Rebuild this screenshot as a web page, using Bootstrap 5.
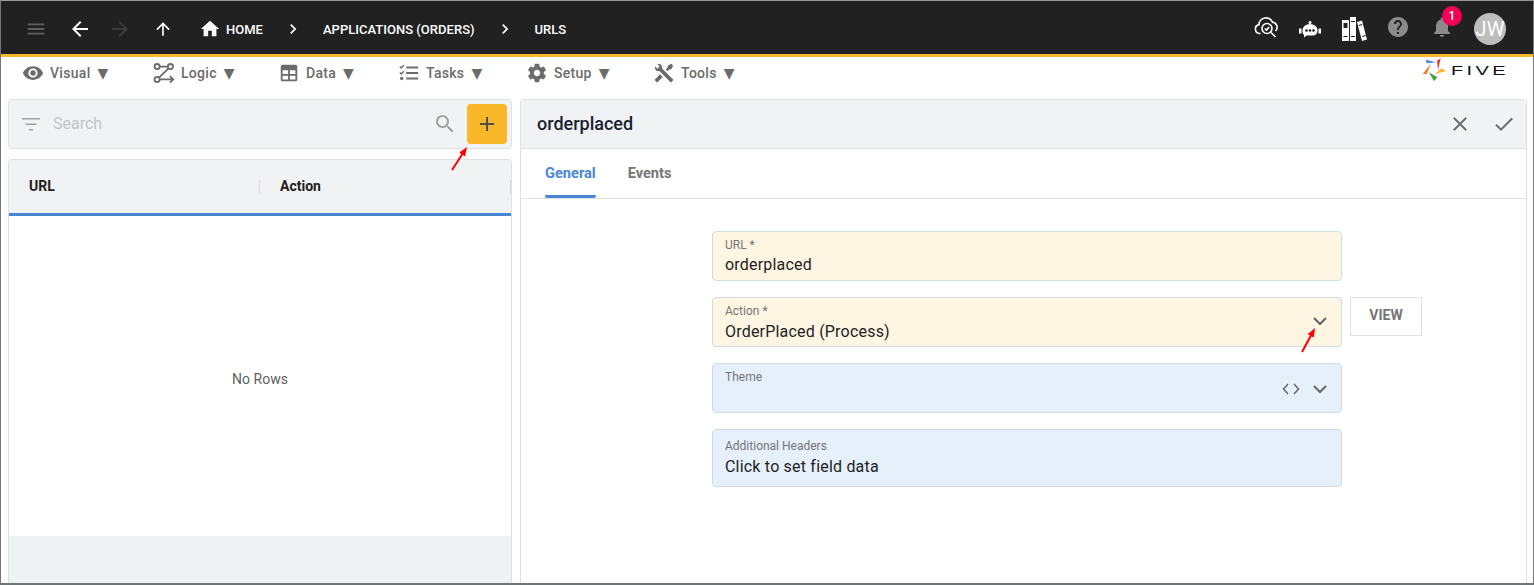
<!DOCTYPE html>
<html lang="en">
<head>
<meta charset="utf-8">
<title>URLs</title>
<link href="https://cdn.jsdelivr.net/npm/bootstrap@5.3.0/dist/css/bootstrap.min.css" rel="stylesheet">
<style>
html,body{height:585px;overflow:hidden;background:#fff}
body{font-family:Roboto,"Liberation Sans",sans-serif;color:#212121}
.shell{height:585px;border-left:1px solid #777;border-right:1px solid #777;border-top:1px solid #999;border-bottom:2px solid #6f7476;display:flex;flex-direction:column;overflow:hidden}
.topbar{height:56px;flex:none;background:#212121;border-bottom:3px solid #f9b72a;padding-left:24px;padding-right:27px;padding-top:2px}
.top-ic{display:block;flex:none}
.top-ic.raised{margin-top:-4px}
.crumb{font-size:13px;font-weight:500;color:#fff;text-transform:uppercase;white-space:nowrap;padding-top:3px;letter-spacing:.02px}
.menubar{height:36px;flex:none;padding-left:21px;padding-right:28px;padding-bottom:4px;position:relative}
.menu-it{font-size:14px;font-weight:500;color:#6b6b6b;letter-spacing:.3px;white-space:nowrap;gap:6px}
.menu-it svg{flex:none}
.tri{font-family:"DejaVu Sans",sans-serif;font-size:14px;margin-left:1px;letter-spacing:0}
.workspace{flex:1;min-height:0;padding:6px 6px 0 7px;gap:8px}
.leftcol{width:504px;flex:none;gap:10px}
.panelbox{background:#f0f2f4;border:1px solid #dfe0e1;border-radius:4px}
.searchbar{height:50px;padding:0 4px 0 10px;flex:none}
.search-ph{font-size:16px;color:#c2c4c6}
.addbtn{width:40px;height:40px;background:#f9b72a;border:0;border-radius:4px;padding:0;position:relative}
.gridbox{flex:1;border:1px solid #dfe0e1;border-bottom:0;border-radius:4px 4px 0 0;overflow:hidden}
.gridhead{height:56px;background:#f0f2f4;border-bottom:3px solid #4a86d6;font-size:14px;font-weight:700;flex:none}
.hcell{width:251px;padding-left:20px;position:relative}
.hcell::after{content:"";position:absolute;right:0;top:4px;height:14px;width:1px;background:#d5d7d9}
.gridbody{flex:1;font-size:14px;color:#5f5f5f;padding-top:6px}
.gridfoot{height:47px;background:#eff2f3;flex:none}
.rightcol{flex:1;min-width:0;border:1px solid #dfe0e1;border-bottom:0;border-radius:4px 4px 0 0}
.formhead{height:49px;background:#f0f2f4;border-bottom:1px solid #dfe0e1;padding:0 10px 0 16px;flex:none}
.formtitle{font-size:18px;font-weight:500;color:#1b2330;margin-top:-2px}
.tabstrip{height:50px;border-bottom:1px solid #e0e0e0;padding-left:24px;gap:32px;flex:none}
.tabit{font-size:14.6px;font-weight:700;color:#757575;height:49px;display:flex;align-items:center;border-bottom:3px solid transparent;padding-top:3px}
.tabit.on{color:#4a86d6;border-bottom-color:#4a86d6;border-radius:0 0 2px 2px}
.formarea{padding-top:32px;padding-left:191px;position:relative}
.frow{display:flex;gap:8px;margin-bottom:16px;align-items:flex-start}
.fbox{width:630px;height:50px;border:1px solid #cfdbe6;border-radius:4px;padding:6px 12px 0;position:relative}
.fbox.req{background:#fff5e3}
.fbox.opt{background:#e5f0fb}
.fbox.tall{height:58px;padding-top:9px}
.flabel{font-size:12px;color:#757575;line-height:15px}
.fval{font-size:16px;letter-spacing:.2px;color:#222;line-height:20px;margin-top:2px}
.fval.lower{margin-top:3px}
.fic{position:absolute;top:15px;right:13px}
.fic.lowered{top:17px}
.fic2{position:absolute;top:17px;right:41px}
.viewbtn{width:72px;height:39px;border:1px solid #e0e0e0;border-radius:0;background:#fff;font-size:14px;font-weight:700;color:#757575;padding:0 0 2px}
.arrow1{position:absolute;left:-17px;top:41px;pointer-events:none}
.arrow2{position:absolute;left:587px;top:28px;pointer-events:none;z-index:2}
.avatar{width:32px;height:32px;border-radius:50%;background:#bdbdbd;color:#fff;font-size:20px;display:flex;align-items:center;justify-content:center;flex:none}
.bellwrap{position:relative;width:24px;height:24px;flex:none}
.notif{position:absolute;left:12px;top:-9px;width:20px;height:20px;border-radius:50%;background:#f50057;color:#fff;font-size:12px;font-weight:500;display:flex;align-items:center;justify-content:center}
.brand{position:absolute;left:1421px;top:0;height:26px}
.brand-word{display:inline-block;font-family:"Liberation Sans",sans-serif;font-size:12.5px;line-height:12px;font-weight:400;color:#111;letter-spacing:2.1px;transform:scaleX(1.6);transform-origin:left center;margin-left:3px;margin-top:8px}
</style>
</head>
<body>
<div class="shell">
  <div class="topbar d-flex align-items-center">
    <svg class="top-ic" width="22" height="22" viewBox="0 0 24 24" fill="#5e5e5e"><path d="M3 18h18v-2H3v2zm0-5h18v-2H3v2zm0-7v2h18V6H3z"/></svg>
    <svg class="top-ic" style="margin-left:21px" width="24" height="24" viewBox="0 0 24 24" fill="#fff"><path d="M20 11H7.830l5.590-5.590L12 4l-8 8 8 8 1.410-1.410L7.830 13H20v-2z"/></svg>
    <svg class="top-ic" style="margin-left:16px" width="24" height="24" viewBox="0 0 24 24" fill="#3a3a3a"><path d="M12 4l-1.410 1.410L16.170 11H4v2h12.170l-5.580 5.590L12 20l8-8z"/></svg>
    <svg class="top-ic" style="margin-left:21px" width="20" height="20" viewBox="0 0 24 24" fill="#fff"><path d="M4 12l1.410 1.410L11 7.830V20h2V7.830l5.580 5.590L20 12l-8-8-8 8z"/></svg>
    <svg class="top-ic" style="margin-left:26px" width="22" height="22" viewBox="0 0 24 24" fill="#fff"><path d="M10 20v-6h4v6h5v-8h3L12 3 2 12h3v8z"/></svg>
    <span class="crumb" style="margin-left:5px">Home</span>
    <svg class="top-ic" style="margin-left:20px" width="20" height="20" viewBox="0 0 24 24" fill="#fff"><path d="M10 6L8.590 7.410 13.170 12l-4.580 4.590L10 18l6-6z"/></svg>
    <span class="crumb" style="margin-left:20px">Applications (Orders)</span>
    <svg class="top-ic" style="margin-left:20px" width="20" height="20" viewBox="0 0 24 24" fill="#fff"><path d="M10 6L8.590 7.410 13.170 12l-4.580 4.590L10 18l6-6z"/></svg>
    <span class="crumb" style="margin-left:20px">URLs</span>
    <div class="ms-auto d-flex align-items-center">
      <svg class="top-ic raised" width="26" height="26" viewBox="0 0 26 26" fill="none" stroke="#fff" stroke-width="1.600"><path d="M6.500 19.500H6a4.500 4.500 0 0 1-1-8.900A7 7 0 0 1 18.400 8.100 5.200 5.200 0 0 1 21.500 17"/><circle cx="13" cy="14.500" r="5"/><path d="M10.800 14.500l1.600 1.600 2.800-3M17 18.500l4.500 4.500"/></svg>
      <svg class="top-ic" style="margin-left:18px" width="24" height="24" viewBox="0 0 24 24" fill="#fff"><circle cx="12" cy="5.500" r="1.500"/><path d="M4.500 13a7.500 6 0 0 1 15 0v1a4.500 4.500 0 0 1-4.500 4.500H8.500L6 20.500V18a4.500 4.500 0 0 1-1.500-3.500z"/><path d="M1 11.500h2.500v5H1zM20.500 11.500H23v5h-2.500z"/><g fill="#212121"><circle cx="8.500" cy="13.500" r="1.300"/><circle cx="12" cy="13.500" r="1.300"/><circle cx="15.500" cy="13.500" r="1.300"/></g></svg>
      <svg class="top-ic" style="margin-left:19px" width="26" height="26" viewBox="0 0 26 26" fill="#fff"><path d="M1 4h7v21H1zM9 1h6v24H9z"/><path d="M16 6l5-1.500 5 19-5 1.500z"/><g fill="#212121"><path d="M2.500 7h4v5h-4zM2.500 20h4v1h-4zM10 5h4v1h-4zM10 20h4v1h-4zM17.500 9l3.500-1 .3 1-3.500 1zM21 20l3.500-1 .3 1-3.500 1z"/></g></svg>
      <svg class="top-ic raised" style="margin-left:19px" width="24" height="24" viewBox="0 0 24 24" fill="#8a8a8a"><path d="M12 2C6.480 2 2 6.480 2 12s4.480 10 10 10 10-4.480 10-10S17.520 2 12 2zm1 17h-2v-2h2v2zm2.070-7.750l-.9.920C13.450 12.900 13 13.500 13 15h-2v-.5c0-1.100.45-2.100 1.170-2.830l1.240-1.260c.37-.36.59-.86.59-1.410 0-1.100-.9-2-2-2s-2 .9-2 2H8c0-2.210 1.790-4 4-4s4 1.790 4 4c0 .88-.36 1.680-.93 2.250z"/></svg>
      <div class="bellwrap" style="margin-left:20px;margin-top:-4px">
        <svg class="top-ic" width="24" height="24" viewBox="0 0 24 24" fill="#8a8a8a"><path d="M12 22c1.100 0 2-.9 2-2h-4c0 1.100.89 2 2 2zm6-6v-5c0-3.070-1.640-5.640-4.500-6.320V4c0-.83-.67-1.500-1.500-1.500s-1.500.67-1.500 1.500v.68C7.630 5.360 6 7.920 6 11v5l-2 2v1h16v-1l-2-2z"/></svg>
        <span class="notif">1</span>
      </div>
      <div class="avatar" style="margin-left:20px">JW</div>
    </div>
  </div>
  <div class="menubar d-flex align-items-center">
    <span class="menu-it d-flex align-items-center" style="width:131px"><svg width="22" height="22" viewBox="0 0 24 24" fill="#6b6b6b"><path d="M12 4.500C7 4.500 2.730 7.610 1 12c1.730 4.390 6 7.500 11 7.500s9.270-3.110 11-7.500c-1.730-4.390-6-7.500-11-7.500zM12 17c-2.760 0-5-2.240-5-5s2.240-5 5-5 5 2.240 5 5-2.240 5-5 5zm0-8c-1.660 0-3 1.340-3 3s1.340 3 3 3 3-1.340 3-3-1.340-3-3-3z"/></svg>Visual<span class="tri">▼</span></span>
    <span class="menu-it d-flex align-items-center" style="width:125px"><svg width="22" height="22" viewBox="0 0 24 24" fill="none" stroke="#6b6b6b" stroke-width="2"><circle cx="4.500" cy="5" r="2.800"/><circle cx="19" cy="5" r="2.800"/><circle cx="4.500" cy="19" r="2.800"/><path d="M7.300 5h9M6.500 17l10.500-10M7.300 19H22m-3.500-3.500L22 19l-3.500 3.500"/></svg>Logic<span class="tri">▼</span></span>
    <span class="menu-it d-flex align-items-center" style="width:120px"><svg width="22" height="22" viewBox="0 0 24 24" fill="#6b6b6b"><path d="M5 3h14a2 2 0 0 1 2 2v14a2 2 0 0 1-2 2H5a2 2 0 0 1-2-2V5a2 2 0 0 1 2-2zm0 6v4h6V9zm8 0v4h6V9zm-8 6v4h6v-4zm8 0v4h6v-4z"/></svg>Data<span class="tri">▼</span></span>
    <span class="menu-it d-flex align-items-center" style="width:128px"><svg width="22" height="22" viewBox="0 0 24 24" fill="#6b6b6b"><path d="M9 5h13v2H9zM9 11h13v2H9zM9 17h13v2H9z"/><path d="M2 5l1.500 1.500L6.500 3.500" fill="none" stroke="#6b6b6b" stroke-width="1.600"/><path d="M2 11.500l1.500 1.500 3-3" fill="none" stroke="#6b6b6b" stroke-width="1.600"/><circle cx="4" cy="18" r="1.800"/></svg>Tasks<span class="tri">▼</span></span>
    <span class="menu-it d-flex align-items-center" style="width:127px"><svg width="22" height="22" viewBox="0 0 24 24" fill="#6b6b6b"><path d="M19.430 12.980c.04-.32.070-.64.070-.98s-.03-.66-.07-.98l2.110-1.650c.19-.15.240-.42.120-.64l-2-3.460c-.12-.22-.39-.3-.61-.22l-2.490 1c-.52-.4-1.080-.73-1.690-.98l-.38-2.650C14.460 2.180 14.250 2 14 2h-4c-.25 0-.46.18-.49.42l-.38 2.650c-.61.25-1.170.59-1.690.98l-2.490-1c-.23-.09-.49 0-.61.22l-2 3.460c-.13.22-.07.49.12.64l2.110 1.650c-.04.32-.07.65-.07.98s.03.66.07.98l-2.110 1.650c-.19.15-.24.42-.12.64l2 3.460c.12.22.39.3.61.22l2.490-1c.52.4 1.080.73 1.690.98l.38 2.650c.03.24.24.42.49.42h4c.25 0 .46-.18.49-.42l.38-2.650c.61-.25 1.170-.59 1.690-.98l2.490 1c.23.09.49 0 .61-.22l2-3.460c.12-.22.07-.49-.12-.64l-2.110-1.650zM12 15.500c-1.930 0-3.500-1.570-3.500-3.500s1.570-3.500 3.500-3.500 3.500 1.570 3.500 3.500-1.570 3.500-3.500 3.500z"/></svg>Setup<span class="tri">▼</span></span>
    <span class="menu-it d-flex align-items-center"><svg width="22" height="22" viewBox="0 0 24 24" fill="#6b6b6b"><path d="M21.710 20.290L20.290 21.710A1 1 0 0 1 18.880 21.710L7 9.850A3.810 3.810 0 0 1 6 10A4 4 0 0 1 2.220 4.700L4.760 7.240L5.290 6.710L6.710 5.290L7.240 4.760L4.700 2.220A4 4 0 0 1 10 6A3.810 3.810 0 0 1 9.850 7L21.710 18.880A1 1 0 0 1 21.710 20.290M2.290 18.880A1 1 0 0 0 2.290 20.290L3.710 21.710A1 1 0 0 0 5.120 21.710L10.590 16.250L7.760 13.420M20 2L16 4V6L13.830 8.170L15.830 10.170L18 8H20L22 4Z"/></svg>Tools<span class="tri">▼</span></span>
    <div class="brand d-flex align-items-start">
      <svg width="26" height="26" viewBox="0 0 26 26"><path d="M3.700 2.700L14.300 5.300 4.700 6.300z" fill="#4a86d6"/><path d="M18.700 1.300L16 13 15 3.700z" fill="#e53935"/><path d="M24 14L12.700 17.300 19.300 11.300z" fill="#f9b72a"/><path d="M7 15.300L15.300 20.300 12 24.300z" fill="#43a047"/><path d="M8.700 7L.7 16.700 4.700 17.300z" fill="#f57c32"/></svg>
      <span class="brand-word">FIVE</span>
    </div>
  </div>
  <div class="workspace d-flex">
    <div class="leftcol d-flex flex-column">
      <div class="panelbox searchbar d-flex align-items-center">
        <svg width="24" height="24" viewBox="0 0 24 24" fill="#a0a3a6"><path d="M3 6h18v1.600H3zM6.500 11.500h11v1.600h-11zM10 17h4v1.600h-4z"/></svg>
        <span class="search-ph" style="margin-left:10px">Search</span>
        <svg class="ms-auto" width="24" height="24" viewBox="0 0 24 24" fill="#a0a3a6"><path d="M15.500 14h-.79l-.28-.27C15.410 12.590 16 11.110 16 9.500 16 5.910 13.090 3 9.500 3S3 5.910 3 9.500 5.910 16 9.500 16c1.610 0 3.090-.59 4.230-1.570l.27.28v.79l5 4.990L20.490 19l-4.990-5zm-6 0C7.010 14 5 11.990 5 9.500S7.010 5 9.500 5 14 7.010 14 9.500 11.990 14 9.500 14z"/></svg>
        <button class="addbtn" style="margin-left:10px" type="button" aria-label="Add">
          <svg width="24" height="24" viewBox="0 0 24 24" fill="#4f4f4f"><path d="M19 13h-6v6h-2v-6H5v-2h6V5h2v6h6v2z"/></svg>
          <svg class="arrow1" width="18" height="28" viewBox="0 0 18 28"><path d="M2 25L13 8" stroke="#f00" stroke-width="2"/><path d="M17 2L15 11.400 9.200 7.600z" fill="#f00"/></svg>
        </button>
      </div>
      <div class="gridbox d-flex flex-column">
        <div class="gridhead d-flex align-items-center">
          <div class="hcell">URL</div>
          <div class="hcell">Action</div>
        </div>
        <div class="gridbody d-flex align-items-center justify-content-center">No Rows</div>
        <div class="gridfoot"></div>
      </div>
    </div>
    <div class="rightcol d-flex flex-column">
      <div class="formhead d-flex align-items-center">
        <span class="formtitle">orderplaced</span>
        <svg class="ms-auto" width="24" height="24" viewBox="0 0 24 24" fill="#6e6e6e"><path d="M19 6.410L17.590 5 12 10.590 6.410 5 5 6.410 10.590 12 5 17.590 6.410 19 12 13.410 17.590 19 19 17.590 13.410 12z"/></svg>
        <svg style="margin-left:20px" width="24" height="24" viewBox="0 0 24 24" fill="#6e6e6e"><path d="M9 16.170L4.830 12l-1.420 1.410L9 19 21 7l-1.410-1.410z"/></svg>
      </div>
      <div class="tabstrip d-flex">
        <div class="tabit on">General</div>
        <div class="tabit">Events</div>
      </div>
      <div class="formarea">
        <div class="frow"><div class="fbox req"><div class="flabel">URL *</div><div class="fval">orderplaced</div></div></div>
        <div class="frow">
          <div class="fbox req"><div class="flabel">Action *</div><div class="fval lower">OrderPlaced (Process)</div>
            <svg class="fic" width="16" height="16" viewBox="0 0 16 16" fill="none" stroke="#666" stroke-width="2"><path d="M2 5l6 6 6-6"/></svg>
            <svg class="arrow2" width="18" height="28" viewBox="0 0 18 28"><path d="M2 26L11.500 8.500" stroke="#f00" stroke-width="2"/><path d="M15 2L13.800 11.600 7.600 8.200z" fill="#f00"/></svg>
          </div>
          <button class="viewbtn" type="button">VIEW</button>
        </div>
        <div class="frow">
          <div class="fbox opt"><div class="flabel">Theme</div>
            <svg class="fic2" width="18" height="16" viewBox="0 0 18 16" fill="none" stroke="#666" stroke-width="1.500"><path d="M6 3L1.500 8 6 13M12 3l4.500 5L12 13"/></svg>
            <svg class="fic lowered" width="16" height="16" viewBox="0 0 16 16" fill="none" stroke="#666" stroke-width="2"><path d="M2 5l6 6 6-6"/></svg>
          </div>
        </div>
        <div class="frow"><div class="fbox opt tall"><div class="flabel">Additional Headers</div><div class="fval lower">Click to set field data</div></div></div>
      </div>
    </div>
  </div>
</div>
</body>
</html>
